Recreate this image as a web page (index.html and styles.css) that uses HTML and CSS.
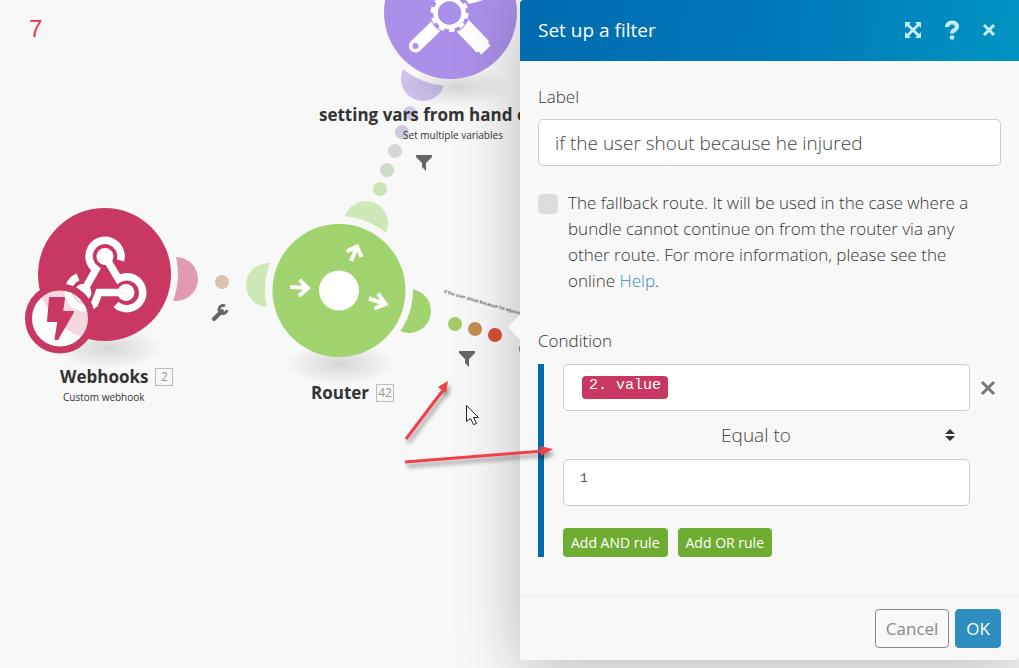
FILE: index.html
```
<!DOCTYPE html>
<html lang="en">
<head>
    <meta charset="UTF-8">
    <title>Set up a filter</title>
    <link rel="stylesheet" href="styles.css">
</head>
<body>
<div class="editor">
    <main class="canvas">
        <svg class="diagram" width="520" height="660">
            <defs>
                <radialGradient id="shade">
                    <stop offset="0" stop-color="#000" stop-opacity=".14"/>
                    <stop offset="1" stop-color="#000" stop-opacity="0"/>
                </radialGradient>
                <path id="funnel" d="M0 0h16v2l-6 6v8l-4-4V8L0 2z"/>
            </defs>

            <!-- connectors -->
            <circle cx="176" cy="279" r="22" fill="#e29ab1"/>
            <circle cx="268" cy="285" r="22" fill="#cfe8b7"/>
            <circle cx="366" cy="223" r="22" fill="#cfe8b7"/>
            <circle cx="409" cy="311" r="22" fill="#a1d36e"/>
            <circle cx="423" cy="79" r="22" fill="#cfc3ee"/>
            <circle class="gap" cx="104" cy="274" r="74"/>
            <circle class="gap" cx="339" cy="290" r="74"/>
            <circle class="gap" cx="450" cy="12" r="74"/>

            <!-- node shadows -->
            <ellipse cx="108" cy="348" rx="56" ry="21" fill="url(#shade)"/>
            <ellipse cx="340" cy="364" rx="56" ry="21" fill="url(#shade)"/>
            <ellipse cx="455" cy="87" rx="56" ry="21" fill="url(#shade)"/>

            <!-- route dots -->
            <circle cx="222" cy="282" r="7" fill="#dac2b3"/>
            <circle cx="380" cy="189" r="7" fill="#cbe5b5"/>
            <circle cx="387" cy="170" r="7" fill="#ccdcc6"/>
            <circle cx="395" cy="151" r="7" fill="#d2d8d4"/>
            <circle cx="402" cy="132" r="7" fill="#cdcbdf"/>
            <circle cx="410" cy="113" r="7" fill="#d0c6ec"/>
            <circle cx="455" cy="324" r="7" fill="#a5cb66"/>
            <circle cx="475" cy="329" r="7" fill="#c18e50"/>
            <circle cx="495" cy="335" r="7" fill="#d95036"/>
            <circle cx="525" cy="349" r="6" fill="#777"/>

            <!-- webhooks -->
            <circle cx="104.5" cy="274.5" r="66.5" fill="#c93763"/>
            <g fill="none" stroke="#fff" stroke-width="7.5">
                <path d="M120.5 260.500A16 16 0 1 0 96 269.500L86 287"/>
                <path d="M106 258L118.500 279A16 16 0 1 1 116 304.500"/>
                <path d="M78 277A16 16 0 1 0 94.500 304L99 292.500H126"/>
            </g>
            <g fill="#fff">
                <circle cx="105" cy="256.5" r="8.500"/>
                <circle cx="126" cy="292.5" r="8.500"/>
                <circle cx="83" cy="292.5" r="8.500"/>
            </g>
            <circle cx="60" cy="318.5" r="31.500" fill="#fff" fill-opacity=".8" stroke="#c93763" stroke-width="7"/>
            <path d="M50 298h14l-2 14h11L57.500 339h-2l3-18H48z" fill="#c93763" stroke="#c93763" stroke-width="2" stroke-linejoin="round"/>

            <!-- router -->
            <circle cx="339" cy="290.5" r="66.500" fill="#a1d36e"/>
            <circle cx="339" cy="290.5" r="20" fill="#fff"/>
            <path d="M290 287l18 1M299.500 280l8.500 8-9 8M351 261l6-14M346.500 251.500l10.500-5 4.500 10.500M369 298.500l16.500 5.500M378 293.500l7.500 10.500-11 4.500" fill="none" stroke="#fff" stroke-width="4"/>

            <!-- tools -->
            <circle cx="450.5" cy="12.5" r="66.500" fill="#aa90e9"/>
            <g fill="none" stroke="#fff">
                <path d="M435 27L415.500 46" stroke-width="13" stroke-linecap="round"/>
                <path d="M462 25L483 47" stroke-width="17"/>
                <path d="M462 25L486 50" stroke-width="13"/>
            </g>
            <circle cx="449.5" cy="13" r="20" fill="#aa90e9"/>
            <circle cx="449.5" cy="13" r="14" fill="none" stroke="#fff" stroke-width="4.500"/>
            <circle cx="449.5" cy="13" r="17" fill="none" stroke="#fff" stroke-width="4" stroke-dasharray="5.500 5.180"/>
            <circle cx="415.5" cy="46" r="3" fill="#aa90e9"/>
            <path d="M466 0h17l-6 2-8 2z" fill="#fff"/>

            <!-- link icons -->
            <use href="#funnel" x="416" y="155" fill="#666"/>
            <use href="#funnel" x="459" y="351" fill="#666"/>
            <path d="M214 319l8-8" stroke="#666" stroke-width="4" stroke-linecap="round"/>
            <path d="M225 306a4 4 0 1 0 2 4" fill="none" stroke="#666" stroke-width="3"/>
        </svg>

        <span class="step">7</span>
        <div class="caption caption-webhooks">
            <div class="name">Webhooks <span class="count">2</span></div>
            <div class="module">Custom webhook</div>
        </div>
        <div class="caption caption-router">
            <div class="name">Router <span class="count">42</span></div>
        </div>
        <div class="caption caption-vars">
            <div class="name">setting vars from hand e</div>
            <div class="module">Set multiple variables</div>
        </div>
        <div class="route-label">if the user shout because he injured</div>
    </main>

    <form class="panel">
        <header class="panel-header">
            <h1>Set up a filter</h1>
            <button type="button" class="icon-btn" aria-label="Expand">
                <svg width="18" height="18" fill="#c9edf8"><path d="M1 1h6L5 3l4 4 4-4-2-2h6v6l-2-2-4 4 4 4 2-2v6h-6l2-2-4-4-4 4 2 2H1v-6l2 2 4-4-4-4-2 2z"/></svg>
            </button>
            <button type="button" class="icon-btn" aria-label="Help">
                <svg width="18" height="20"><path d="M5 7C5 1 15 1 15 6.500c0 4-5 3-5 7" fill="none" stroke="#c9edf8" stroke-width="4"/><circle cx="10" cy="17.500" r="2.300" fill="#c9edf8"/></svg>
            </button>
            <button type="button" class="icon-btn" aria-label="Close">
                <svg width="18" height="18" stroke="#c9edf8" stroke-width="3"><path d="M4 4l10 10M14 4L4 14"/></svg>
            </button>
        </header>

        <div class="panel-body">
            <label class="title" for="label">Label</label>
            <input class="field" type="text" id="label" value="if the user shout because he injured">

            <div class="fallback">
                <input type="checkbox" id="fallback">
                <label for="fallback">The fallback route. It will be used in the case where a bundle cannot continue on from the router via any other route. For more information, please see the online <a href="#">Help</a>.</label>
            </div>

            <div class="title" id="condition">Condition</div>
            <div class="rules" role="group" aria-labelledby="condition">
                <div class="operand field" role="textbox" tabindex="0" aria-label="Value"><span class="tag">2. value</span></div>
                <button type="button" class="remove" aria-label="Remove rule">
                    <svg width="16" height="16" stroke="#777" stroke-width="3"><path d="M2 2l12 12M14 2L2 14"/></svg>
                </button>
                <div class="operator">
                    <select aria-label="Operator">
                        <option>Equal to</option>
                    </select>
                    <svg width="10" height="14" fill="#333"><path d="M0 6l5-5 5 5zM0 8h10l-5 5z"/></svg>
                </div>
                <textarea class="operand field" rows="1" aria-label="Compare with">1</textarea>
                <div class="actions">
                    <button type="button" class="add">Add AND rule</button>
                    <button type="button" class="add">Add OR rule</button>
                </div>
            </div>
        </div>

        <footer class="panel-footer">
            <button type="button" class="btn cancel">Cancel</button>
            <button type="submit" class="btn ok">OK</button>
        </footer>
    </form>

    <svg class="pointers" width="560" height="480">
        <g class="arrows">
            <path d="M406 439l38-50" stroke="#f04148" stroke-width="3"/>
            <path d="M448 381l-2 12-8-6z" fill="#f04148"/>
            <path d="M405 462l139-11" stroke="#f04148" stroke-width="3"/>
            <path d="M553 449l-12 7-1-10z" fill="#f04148"/>
        </g>
        <path d="M466.500 405.500v16l4-3 3 6 3-1-3-6h5z" fill="#fff" stroke="#222"/>
    </svg>
</div>
</body>
</html>
```
FILE: styles.css
```
* {
    box-sizing: border-box;
}
body {
    margin: 0;
    background: #f8f8f8;
    color: #333;
    font-family: "Open Sans", "Noto Sans", sans-serif;
    font-size: 17px;
}
button, input, select, textarea {
    font-family: inherit;
}
.editor {
    position: relative;
    display: grid;
    grid-template-columns: 520fr 499fr;
    align-items: start;
    min-height: 100vh;
    overflow: hidden;
}

/* scenario canvas */
.canvas {
    position: relative;
    align-self: stretch;
    overflow: hidden;
}
.diagram {
    display: block;
}
.gap {
    fill: #f8f8f8;
}
.step {
    position: absolute;
    left: 29px;
    top: 15px;
    color: #e8383d;
    font: 24px/28px "Liberation Sans", sans-serif;
}
.caption {
    position: absolute;
    white-space: nowrap;
    text-align: center;
}
.caption-webhooks {
    left: 60px;
    top: 365px;
}
.caption-router {
    left: 311px;
    top: 381px;
}
.caption-vars {
    left: 319px;
    top: 103px;
}
.name {
    display: flex;
    align-items: center;
    gap: 7px;
    font-size: 17px;
    font-weight: bold;
    line-height: 24px;
}
.count {
    min-width: 18px;
    border: 1px solid #bbb;
    color: #999;
    font-size: 12px;
    font-weight: normal;
    line-height: 16px;
}
.module {
    font-size: 10px;
    line-height: 16px;
}
.caption-webhooks .module {
    text-align: left;
    padding-left: 3px;
}
.caption-vars .module {
    padding-left: 60px;
}
.route-label {
    position: absolute;
    left: 444px;
    top: 288px;
    font: 5px/8px "Liberation Sans", sans-serif;
    text-rendering: geometricPrecision;
    white-space: nowrap;
    transform: rotate(16deg);
    transform-origin: 0 50%;
}

/* filter panel */
.panel {
    position: relative;
    background: #f8f8f8;
    border-radius: 4px;
    box-shadow: 0 8px 64px rgba(0, 0, 0, .26);
    font-weight: 350;
}
.panel::before {
    content: "";
    position: absolute;
    left: -12px;
    top: 314px;
    border: 13px solid transparent;
    border-left: 0;
    border-right: 12px solid #f8f8f8;
}
.panel-header {
    display: flex;
    align-items: center;
    gap: 20px;
    height: 61px;
    padding: 0 21px 2px 18px;
    background: linear-gradient(100deg, #006bae, #0078b8 50%, #0094c3);
    border-radius: 4px 0 0;
}
.panel-header h1 {
    flex: 1;
    margin: 0;
    color: #fff;
    font-size: 19px;
    font-weight: normal;
}
.icon-btn, .remove {
    display: flex;
    padding: 0;
    border: 0;
    background: none;
    cursor: pointer;
}
.panel-body {
    padding: 23px 18px 39px;
}
.title {
    display: block;
    line-height: 26px;
}
.field {
    display: block;
    width: 100%;
    height: 47px;
    border: 1px solid #ccc;
    border-radius: 5px;
    background: #fff;
}
input.field {
    margin: 9px 0 24px;
    padding: 0 16px;
    color: #444;
    font-size: 19px;
    font-weight: 350;
}
.fallback {
    display: flex;
    gap: 10px;
    margin-bottom: 34px;
    padding-right: 18px;
    line-height: 26px;
}
.fallback input {
    flex: none;
    appearance: none;
    width: 20px;
    height: 20px;
    margin: 4px 0 0;
    border-radius: 4px;
    background: #dcdcdc;
}
.fallback a {
    color: #2f8dbf;
    text-decoration: none;
}
.rules {
    display: grid;
    grid-template-columns: 1fr 21px;
    column-gap: 10px;
    align-items: center;
    margin-top: 10px;
    padding-left: 19px;
    border-left: 6px solid #006bae;
}
.operand {
    padding: 11px 16px;
    color: #555;
    font: 13px/16px "Liberation Mono", monospace;
    resize: none;
}
.tag {
    display: inline-block;
    margin-left: 2px;
    padding: 2px 7px 5px;
    border-radius: 4px;
    background: #c93763;
    color: #fff;
    font-size: 15px;
}
.operator {
    display: flex;
    align-items: center;
    height: 48px;
    padding: 0 15px 0 4px;
}
.operator select {
    flex: 1;
    appearance: none;
    border: 0;
    background: none;
    color: #444;
    font-size: 19px;
    font-weight: 350;
    text-align: center;
    text-align-last: center;
}
textarea.operand, .operator, .actions {
    grid-column: 1;
}
.actions {
    display: flex;
    gap: 10px;
    margin-top: 22px;
}
.add {
    height: 29px;
    padding: 0 8px;
    border: 0;
    border-radius: 4px;
    background: #6fad32;
    color: #fff;
    font-size: 14px;
}
.panel-footer {
    display: flex;
    justify-content: flex-end;
    gap: 6px;
    padding: 12px 18px;
    border-top: 1px solid #eee;
}
.btn {
    height: 39px;
    padding: 0 10px;
    border: 1px solid #888;
    border-radius: 4px;
    background: none;
    color: #888;
    font-size: 17px;
}
.ok {
    border-color: #2f8dbf;
    background: #2f8dbf;
    color: #fff;
}

/* pointer marks over the editor */
.pointers {
    position: absolute;
    left: 0;
    top: 0;
    pointer-events: none;
}
.arrows {
    filter: drop-shadow(2px 4px 2px rgba(0, 0, 0, .4));
}
```
